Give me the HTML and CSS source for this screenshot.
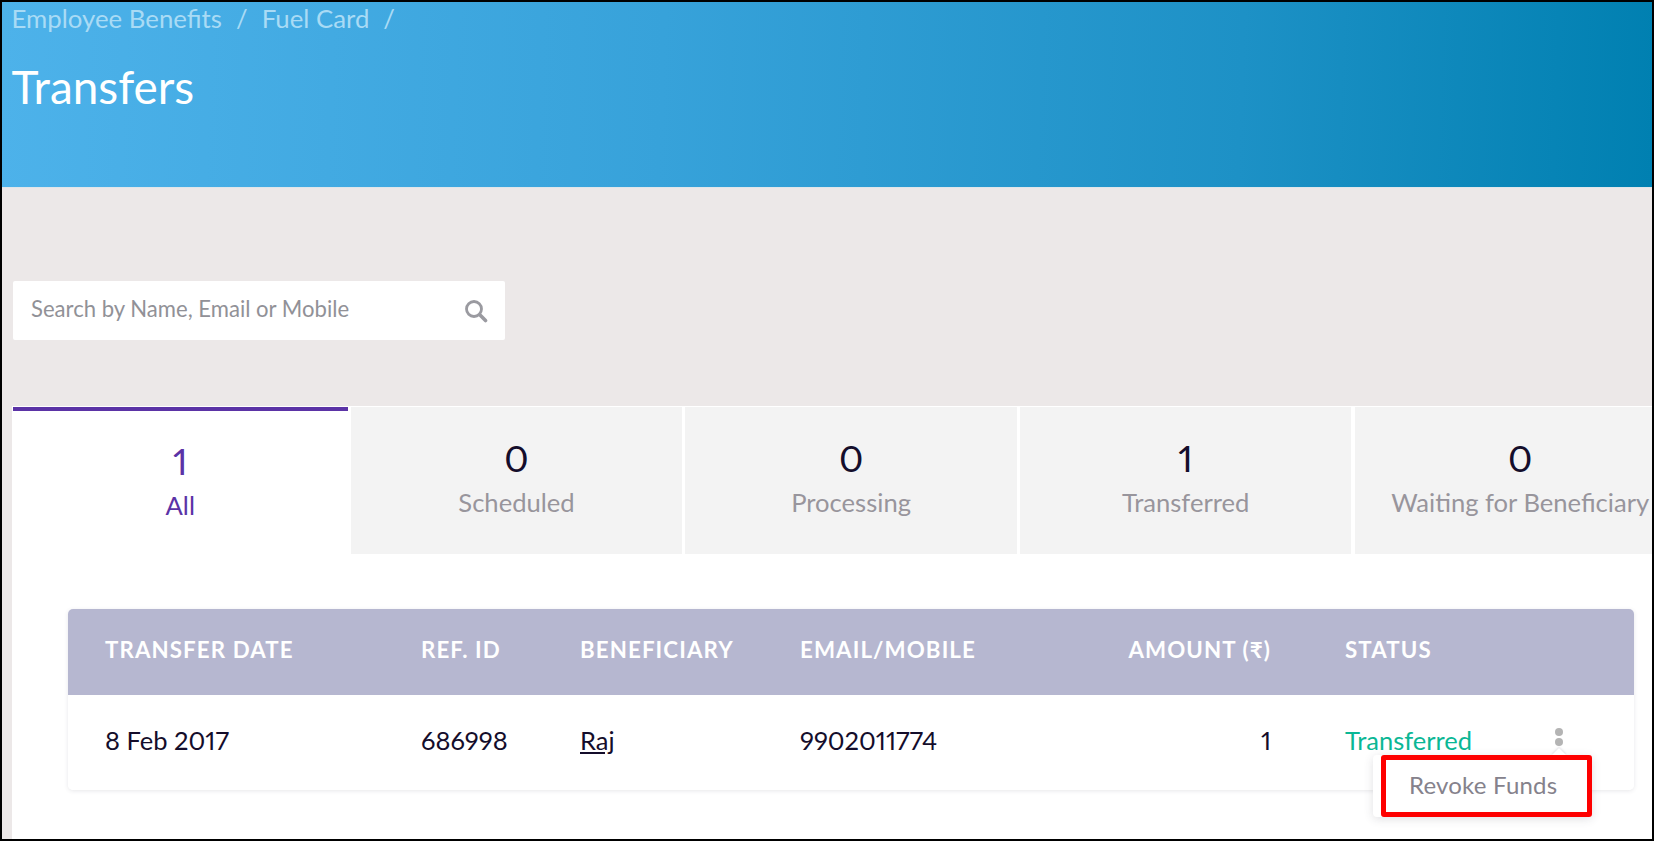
FILE: index.html
```html
<!DOCTYPE html>
<html lang="en">
<head>
<meta charset="utf-8">
<title>Transfers</title>
<link rel="stylesheet" href="styles.css">
</head>
<body>
<div class="frame">
  <header class="hero">
    <nav class="crumbs"><span>Employee Benefits</span><span class="sep">/</span><span>Fuel Card</span><span class="sep">/</span></nav>
    <h1 class="title">Transfers</h1>
  </header>
  <main class="main">
    <div class="search-band">
      <div class="search">
        <span class="search-text">Search by Name, Email or Mobile</span>
        <svg class="search-icon" viewBox="0 0 24 24" width="24" height="24" fill="none" stroke="#9a9aa0" stroke-linecap="round"><circle cx="10" cy="10" r="7.5" stroke-width="2.8"/><path d="M15.8 15.8L21.5 21.5" stroke-width="3.6"/></svg>
      </div>
    </div>
    <section class="panel">
      <div class="tabs">
        <div class="tab tab-active"><div class="tab-num">1</div><div class="tab-label">All</div></div>
        <div class="tab"><div class="tab-num">0</div><div class="tab-label">Scheduled</div></div>
        <div class="tab"><div class="tab-num">0</div><div class="tab-label">Processing</div></div>
        <div class="tab"><div class="tab-num">1</div><div class="tab-label">Transferred</div></div>
        <div class="tab"><div class="tab-num">0</div><div class="tab-label">Waiting for Beneficiary</div></div>
      </div>
      <div class="table">
        <div class="row row-head">
          <div>TRANSFER DATE</div><div>REF. ID</div><div>BENEFICIARY</div><div>EMAIL/MOBILE</div><div class="right">AMOUNT (₹)</div><div class="col-status">STATUS</div>
        </div>
        <div class="row row-body">
          <div>8 Feb 2017</div><div>686998</div><div><a class="link" href="#">Raj</a></div><div>9902011774</div><div class="right">1</div><div class="col-status status">Transferred</div>
          <div class="menu-cell">
            <span class="dots"><i></i><i></i></span>
            <div class="popover"><span class="caret"></span><div class="highlight">Revoke Funds</div></div>
          </div>
        </div>
      </div>
    </section>
  </main>
</div>
</body>
</html>
```

FILE: styles.css
```css
* { box-sizing: border-box; }
html, body { margin: 0; padding: 0; }
body { font-family: "Lato", "Open Sans", sans-serif; background: #fff; font-variant-numeric: proportional-nums; }
.frame { width: 1654px; height: 841px; border: 2px solid #000; overflow: hidden; background: #ece8e8; display: flex; flex-direction: column; }
.hero { height: 186px; flex: none; padding: 0 10px 0 9.5px; background: linear-gradient(92deg, #4db2ea 0%, #37a2da 40%, #1d91c6 75%, #0080b1 100%); border-bottom: 1px solid #dfe6ea; }
.crumbs { display: flex; gap: 14px; font-size: 25.8px; line-height: 33px; color: #a9dbf5; }
.title { margin: 25px 0 0; font-size: 45.9px; line-height: 54px; font-weight: 400; color: #fff; }
.main { flex: 1; display: flex; flex-direction: column; padding-left: 10px; min-height: 0; }
.search-band { height: 218px; flex: none; padding: 93px 0 0 1px; }
.search { width: 492px; height: 59px; background: #fff; border-radius: 2px; padding: 0 17px 4px 18px; display: flex; align-items: center; justify-content: space-between; }
.search-text { font-size: 22.1px; color: #919197; }
.search-icon { flex: none; margin-top: 4px; }
.panel { flex: 1; background: #fff; min-height: 0; overflow: hidden; position: relative; }
.tabs { display: flex; gap: 3.4px; margin: 1px 0 0 1px; height: 147px; }
.tab { flex: 0 0 331.2px; background: #f3f3f3; text-align: center; padding-top: 30px; }
.tab-active { flex-basis: 334.5px; background: #fff; border-top: 4px solid #5b33a6; padding-top: 29px; }
.tab-num { font-size: 37px; line-height: 42px; color: #140d2b; }
.tab-label { font-size: 25.6px; line-height: 44px; padding-top: 1px; color: #98959c; }
.tab-active .tab-num, .tab-active .tab-label { color: #5b33a6; }
.table { margin: 55px 18px 0 56px; border-radius: 5px; box-shadow: 0 1px 4px rgba(60,60,80,.12); }
.row { display: grid; grid-template-columns: 316px 159px 220px 210px 261px 254px 1fr; padding-left: 37px; align-items: center; }
.right { text-align: right; }
.col-status { margin-left: 74px; }
.row-head { height: 86px; padding-bottom: 5px; background: #b6b7d0; border-radius: 5px 5px 0 0; color: #fff; font-size: 22.3px; font-weight: 700; letter-spacing: 1.1px; }
.row-body { height: 95px; padding-bottom: 5px; background: #fff; border-radius: 0 0 5px 5px; color: #140d2b; font-size: 25.5px; }
.link { color: #140d2b; text-decoration: underline; }
.status { color: #0ab795; }
.menu-cell { position: relative; align-self: stretch; }
.dots { position: absolute; left: 30px; top: 33px; display: flex; flex-direction: column; gap: 2px; }
.dots i { display: block; width: 8px; height: 8px; border-radius: 50%; background: #b4b4b4; }
.popover { position: absolute; right: 42px; top: 60px; width: 219px; height: 62px; background: #fff; border-radius: 4px; box-shadow: 0 2px 10px rgba(60,60,80,.16); }
.caret { position: absolute; right: 28px; top: -5px; width: 10px; height: 10px; background: #fff; transform: rotate(45deg); box-shadow: -1px -1px 2px rgba(60,60,80,.12); }
.highlight { position: absolute; left: 8px; right: 0; top: 0; bottom: 0; border: 5.5px solid #fe0000; border-radius: 3px; font-size: 24px; color: #85828c; display: flex; align-items: center; padding: 0 0 3px 23px; letter-spacing: .2px; }
```
